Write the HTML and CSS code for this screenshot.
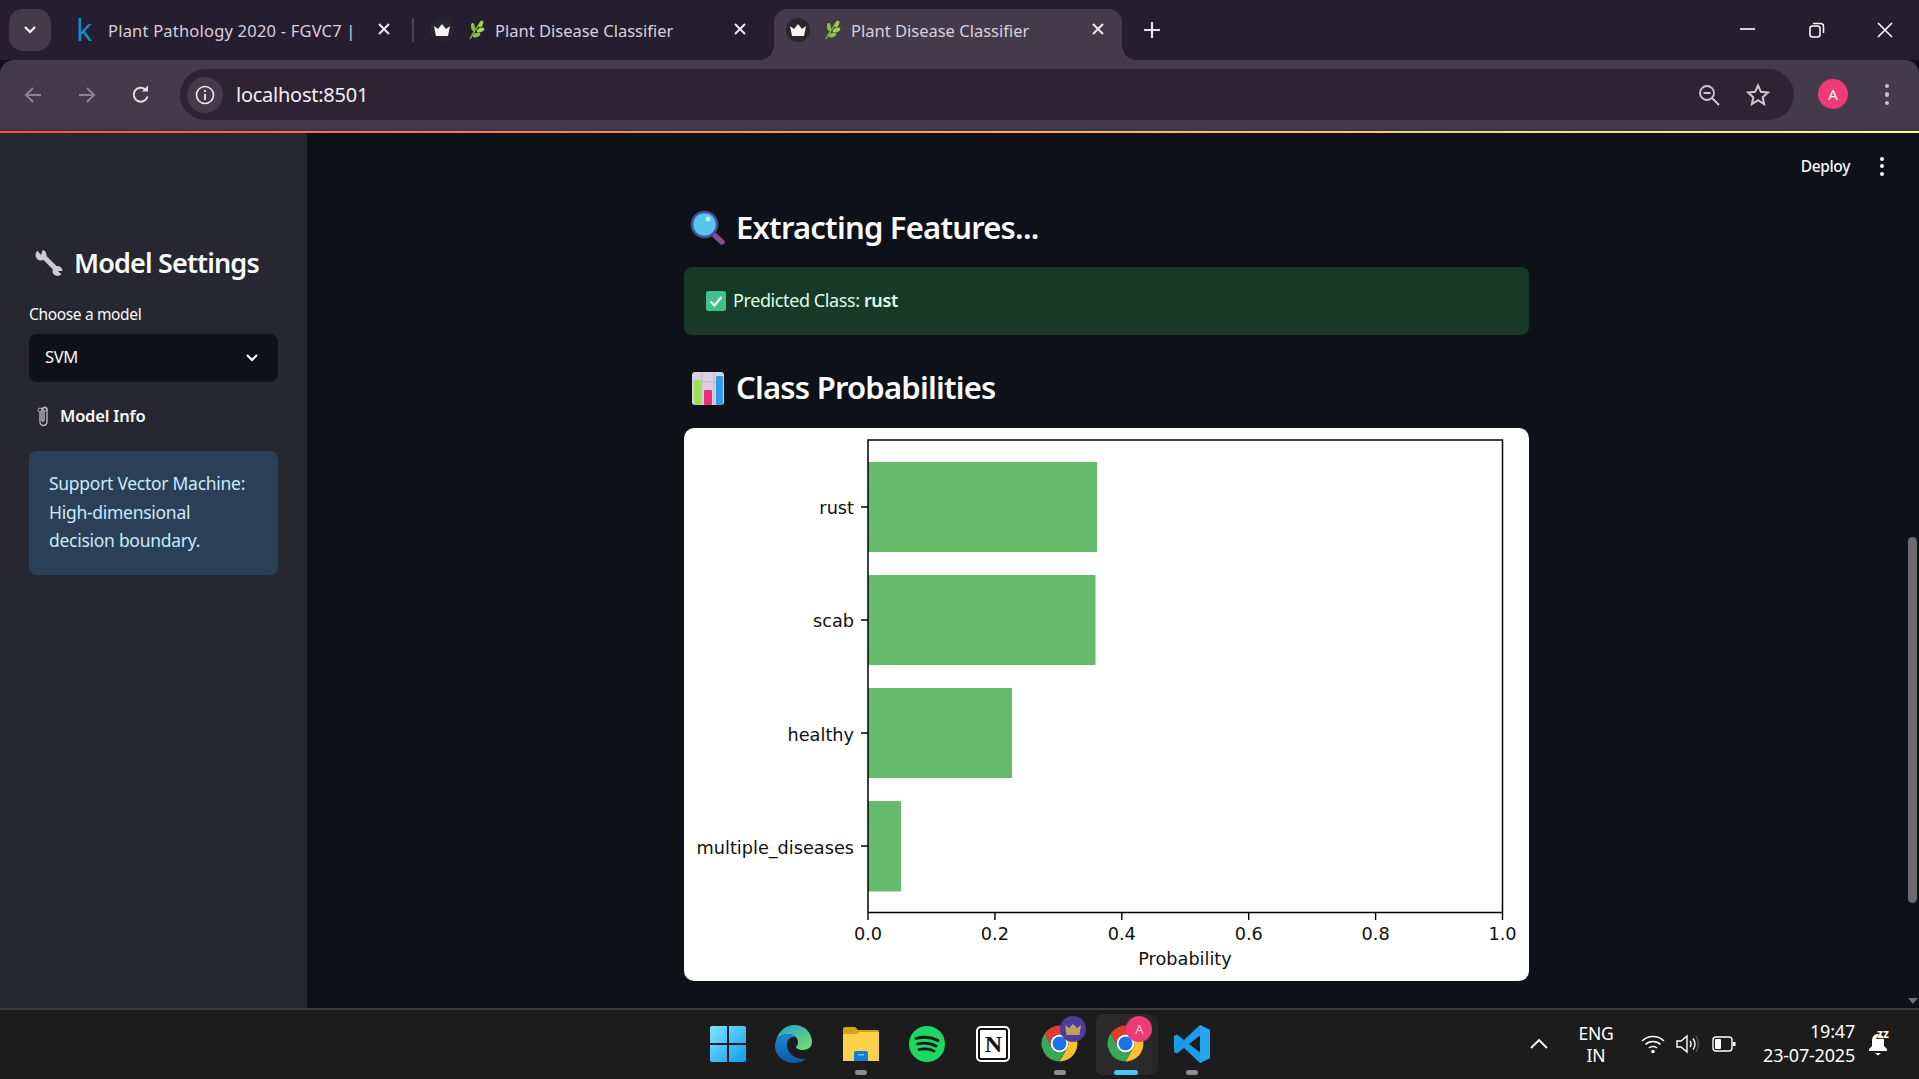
FILE: index.html
```html
<!DOCTYPE html>
<html lang="en">
<head>
<meta charset="utf-8">
<title>Plant Disease Classifier</title>
<link rel="stylesheet" href="styles.css">
</head>
<body>
<div class="screen">
  <header class="tabstrip">
    <div class="tab-menu"><svg width="14" height="10" viewBox="0 0 14 10"><path d="M2 2l5 5 5-5" fill="none" stroke="#fff" stroke-width="2.2"/></svg></div>
    <div class="tab tab-first">
      <span class="kaggle">k</span>
      <span class="tab-title">Plant Pathology 2020 - FGVC7 |</span>
      <svg class="tab-close" width="20" height="20" viewBox="0 0 20 20"><path d="M5 5l10 10M15 5L5 15" stroke="#efe9f3" stroke-width="2"/></svg>
    </div>
    <span class="tab-sep"></span>
    <div class="tab tab-second">
      <span class="crown-badge"><svg width="18" height="14" viewBox="0 0 18 14"><path d="M1 3l4 3 4-5 4 5 4-3-2 10H3z" fill="#f4f4f4"/></svg></span>
      <svg class="leaf" width="20" height="20" viewBox="0 0 20 20"><path d="M4 19C7 13 10 8 15 2" fill="none" stroke="#7fb53a" stroke-width="1.5"/><ellipse cx="15" cy="4" rx="2" ry="3.6" fill="#9fd043" transform="rotate(25 15 4)"/><ellipse cx="14.5" cy="10" rx="4" ry="2" fill="#a6d64a" transform="rotate(-20 14.5 10)"/><ellipse cx="7" cy="7" rx="1.9" ry="4" fill="#8cc63f" transform="rotate(-8 7 7)"/><ellipse cx="10.5" cy="15" rx="4" ry="2" fill="#8cc63f" transform="rotate(-20 10.5 15)"/></svg>
      <span class="tab-title">Plant Disease Classifier</span>
      <svg class="tab-close" width="20" height="20" viewBox="0 0 20 20"><path d="M5 5l10 10M15 5L5 15" stroke="#efe9f3" stroke-width="2"/></svg>
    </div>
    <div class="tab tab-active">
      <span class="crown-badge"><svg width="18" height="14" viewBox="0 0 18 14"><path d="M1 3l4 3 4-5 4 5 4-3-2 10H3z" fill="#f4f4f4"/></svg></span>
      <svg class="leaf" width="20" height="20" viewBox="0 0 20 20"><path d="M4 19C7 13 10 8 15 2" fill="none" stroke="#7fb53a" stroke-width="1.5"/><ellipse cx="15" cy="4" rx="2" ry="3.6" fill="#9fd043" transform="rotate(25 15 4)"/><ellipse cx="14.5" cy="10" rx="4" ry="2" fill="#a6d64a" transform="rotate(-20 14.5 10)"/><ellipse cx="7" cy="7" rx="1.9" ry="4" fill="#8cc63f" transform="rotate(-8 7 7)"/><ellipse cx="10.5" cy="15" rx="4" ry="2" fill="#8cc63f" transform="rotate(-20 10.5 15)"/></svg>
      <span class="tab-title">Plant Disease Classifier</span>
      <svg class="tab-close" width="20" height="20" viewBox="0 0 20 20"><path d="M5 5l10 10M15 5L5 15" stroke="#efe9f3" stroke-width="2"/></svg>
    </div>
    <svg class="tab-new" width="20" height="20" viewBox="0 0 20 20"><path d="M10 2v16M2 10h16" stroke="#e6dfea" stroke-width="2.2"/></svg>
    <div class="window-controls">
      <span class="win-btn win-min"><svg width="16" height="16" viewBox="0 0 16 16"><path d="M0 7h15" stroke="#fff" stroke-width="1.6"/></svg></span>
      <span class="win-btn"><svg width="16" height="16" viewBox="0 0 16 16"><rect x="1" y="4" width="10" height="11" rx="2.5" fill="none" stroke="#fff" stroke-width="1.5"/><path d="M4 1.500h7.500A3 3 0 0 1 14.500 4.500V11" fill="none" stroke="#fff" stroke-width="1.5"/></svg></span>
      <span class="win-btn"><svg width="16" height="16" viewBox="0 0 16 16"><path d="M1 1l14 14M15 1L1 15" stroke="#fff" stroke-width="1.6"/></svg></span>
    </div>
  </header>

  <nav class="toolbar">
    <span class="nav-btn"><svg width="20" height="20" viewBox="0 0 20 20"><path d="M18 10H3M10 3l-7 7 7 7" fill="none" stroke="#8b8492" stroke-width="2"/></svg></span>
    <span class="nav-btn"><svg width="20" height="20" viewBox="0 0 20 20"><path d="M2 10h15M10 3l7 7-7 7" fill="none" stroke="#8b8492" stroke-width="2"/></svg></span>
    <span class="nav-btn"><svg width="20" height="20" viewBox="0 0 20 20"><path d="M16.500 11.500A7 7 0 1 1 14.500 4.500" fill="none" stroke="#e6dfea" stroke-width="2"/><path d="M11 6.500h6v-6z" fill="#e6dfea"/></svg></span>
    <div class="address">
      <span class="info-chip"><svg width="20" height="20" viewBox="0 0 20 20"><circle cx="10" cy="10" r="8.500" fill="none" stroke="#efe9f3" stroke-width="1.600"/><path d="M10 9v6M10 5v2" stroke="#efe9f3" stroke-width="1.800"/></svg></span>
      <span class="url">localhost:8501</span>
      <span class="addr-icons">
        <svg width="22" height="22" viewBox="0 0 22 22"><circle cx="9" cy="9" r="7" fill="none" stroke="#cfc8d4" stroke-width="1.800"/><path d="M5.500 9h7M14 14l7 7" stroke="#cfc8d4" stroke-width="1.800"/></svg>
        <svg width="24" height="24" viewBox="0 0 24 24"><path d="M12 2.500l2.900 6.300 6.900.8-5.100 4.700 1.400 6.800L12 17.200l-6.100 3.900 1.400-6.800L2.200 9.600l6.900-.8z" fill="none" stroke="#cfc8d4" stroke-width="2"/></svg>
      </span>
    </div>
    <span class="avatar">A</span>
    <span class="kebab"><i></i><i></i><i></i></span>
  </nav>

  <div class="decoration"></div>

  <div class="app">
    <aside class="sidebar">
      <h2 class="side-title">
        <svg width="28" height="28" viewBox="0 0 28 28"><path d="M7 6l15 15" stroke="#cfc7dc" stroke-width="5"/><circle cx="6" cy="6" r="5.500" fill="#cfc7dc"/><path d="M6 6L1 0h7z" fill="#262730"/><circle cx="22.500" cy="22" r="5" fill="#cfc7dc"/><path d="M23 22l5 0 0 5z" fill="#262730"/></svg>
        <span class="side-title-text">Model Settings</span>
      </h2>
      <label class="field-label">Choose a model</label>
      <div class="select">
        <span class="select-value">SVM</span>
        <svg width="14" height="10" viewBox="0 0 14 10"><path d="M2 2l5 5 5-5" fill="none" stroke="#fff" stroke-width="2.200"/></svg>
      </div>
      <div class="info-title">
        <svg width="14" height="22" viewBox="0 0 14 22"><path d="M4 7v10a3.500 3.500 0 0 0 7 0V5a2.500 2.500 0 0 0-5 0v10a1 1 0 0 0 2 0V6" fill="none" stroke="#b9b4bd" stroke-width="1.400"/><circle cx="4" cy="5" r="2" fill="none" stroke="#b9b4bd"/><circle cx="9" cy="4" r="2" fill="none" stroke="#b9b4bd"/></svg>
        <strong>Model Info</strong>
      </div>
      <div class="info-box">Support Vector Machine:<br>High-dimensional<br>decision boundary.</div>
    </aside>

    <main class="main">
      <div class="stream-header">
        <span class="deploy">Deploy</span>
        <span class="kebab kebab-white"><i></i><i></i><i></i></span>
      </div>
      <section class="content">
        <h2 class="heading">
          <svg width="36" height="36" viewBox="0 0 36 36"><path d="M21 22l11 10" stroke="#8a4a92" stroke-width="5.500" stroke-linecap="round"/><circle cx="14.500" cy="14.500" r="12.500" fill="#56c7ea" stroke="#4c4a9a" stroke-width="2.500"/><circle cx="18" cy="9" r="2.500" fill="#c6f0fb"/></svg>
          <span class="heading-text">Extracting Features...</span>
        </h2>
        <div class="success">
          <svg width="20" height="20" viewBox="0 0 20 20"><rect width="20" height="20" rx="2.500" fill="#41c28a"/><path d="M4.500 10.500l4 4 7-8.500" fill="none" stroke="#fff" stroke-width="2"/></svg>
          <span class="success-text">Predicted Class: <strong>rust</strong></span>
        </div>
        <h2 class="heading heading-second">
          <svg width="36" height="36" viewBox="0 0 36 36"><rect x="2" y="2" width="32" height="33" rx="3" fill="#d8d2de"/><path d="M12 2v33M24 2v33M2 12h32" stroke="#bdb6c6"/><rect x="4" y="10" width="7" height="25" rx="2" fill="#9ee05a"/><rect x="14" y="20" width="8" height="15" rx="1" fill="#ea2f78"/><rect x="26" y="6" width="7" height="29" rx="1" fill="#2f9bf0"/></svg>
          <span class="heading-text">Class Probabilities</span>
        </h2>
        <figure class="chart-card">
          <svg class="chart" viewBox="684 428 845 553" width="845" height="553">
            <g class="bars">
              <rect x="868" y="462" width="229" height="90"/>
              <rect x="868" y="575" width="227.500" height="90"/>
              <rect x="868" y="688" width="144" height="90"/>
              <rect x="868" y="801" width="33" height="90.500"/>
            </g>
            <rect class="frame" x="868" y="440" width="634.500" height="472.500"/>
            <path class="ticks" d="M861 507h7M861 620h7M861 733h7M861 846h7M868 913v7M994.900 913v7M1121.800 913v7M1248.700 913v7M1375.600 913v7M1502.500 913v7"/>
            <g class="y-labels">
              <text x="854" y="514">rust</text>
              <text x="854" y="627">scab</text>
              <text x="854" y="741">healthy</text>
              <text x="854" y="854">multiple_diseases</text>
            </g>
            <g class="x-labels">
              <text x="868" y="940">0.0</text>
              <text x="994.900" y="940">0.2</text>
              <text x="1121.800" y="940">0.4</text>
              <text x="1248.700" y="940">0.6</text>
              <text x="1375.600" y="940">0.8</text>
              <text x="1502.500" y="940">1.0</text>
              <text x="1185" y="965">Probability</text>
            </g>
          </svg>
        </figure>
      </section>
      <div class="scroll-thumb"></div>
      <div class="scroll-arrow"></div>
    </main>
  </div>

  <footer class="taskbar">
    <div class="task-icons">
      <span class="task-item">
        <svg width="36" height="36" viewBox="0 0 36 36"><defs><linearGradient id="w" x1="0" y1="0" x2="1" y2="1"><stop offset="0" stop-color="#7fe4fb"/><stop offset="1" stop-color="#0f9df0"/></linearGradient></defs><path d="M0 2a2 2 0 0 1 2-2h15v17H0zM19 0h15a2 2 0 0 1 2 2v15H19zM0 19h17v17H2a2 2 0 0 1-2-2zM19 19h17v15a2 2 0 0 1-2 2H19z" fill="url(#w)"/></svg>
      </span>
      <span class="task-item">
        <svg width="38" height="38" viewBox="0 0 38 38"><defs><linearGradient id="e1" x1="0" y1="0" x2="1" y2="1"><stop offset="0" stop-color="#1ba0d8"/><stop offset="1" stop-color="#7be06a"/></linearGradient><linearGradient id="e2" x1="0" y1="0" x2="0" y2="1"><stop offset="0" stop-color="#1e88d6"/><stop offset="1" stop-color="#0c59a4"/></linearGradient></defs><path d="M19 0C29 0 37 7 37 17c0 5-4 8-9 8-4 0-7-2-7-3 0-1 2-1 2-5 0-5-5-8-10-8-6 0-13 4-13 12C1 9 9 0 19 0z" fill="url(#e1)"/><path d="M0 21c0-8 7-12 13-12 3 0 6 1 8 3-5-1-9 2-9 8 0 8 8 14 16 14 2 0 3 0 4-1-3 3-8 5-13 5C9 38 0 31 0 21z" fill="url(#e2)"/></svg>
      </span>
      <span class="task-item task-open">
        <svg width="36" height="34" viewBox="0 0 36 34"><path d="M0 2a2 2 0 0 1 2-2h10l3 3h19a2 2 0 0 1 2 2v6H0z" fill="#dca211"/><path d="M0 7h14l3-2h19v29H0z" fill="#fdd04c"/><path d="M11 26a2 2 0 0 1 2-2h10a2 2 0 0 1 2 2v8H11z" fill="#0f7fd6"/><rect x="15" y="27" width="6" height="1.500" fill="#7cc3f2"/></svg>
      </span>
      <span class="task-item">
        <svg width="36" height="36" viewBox="0 0 36 36"><circle cx="18" cy="18" r="18" fill="#1ed760"/><path d="M7 12.500c7-2 15-1.500 22 2M8.500 18c6-1.500 13-1 18.500 2M10 23.500c5-1 11-.8 15 1.600" fill="none" stroke="#14161a" stroke-width="2.800" stroke-linecap="round"/></svg>
      </span>
      <span class="task-item">
        <span class="notion">N</span>
      </span>
      <span class="task-item task-open">
        <span class="chrome-wrap">
          <svg width="39" height="39" viewBox="0 0 48 48"><use href="#chrome-logo"/></svg>
          <span class="chrome-badge badge-purple"><svg width="18" height="12" viewBox="0 0 18 12"><path d="M1 2l4 3 4-4 4 4 4-3-1.500 10h-13z" fill="#b9a25e"/></svg></span>
        </span>
      </span>
      <span class="task-item task-active">
        <span class="chrome-wrap">
          <svg width="39" height="39" viewBox="0 0 48 48"><symbol id="chrome-logo" viewBox="0 0 48 48"><path d="M5.950 11.350A22 22 0 0 1 43.050 13H24A11 11 0 0 0 14.470 29.500z" fill="#e33b2e"/><path d="M43.050 13A22 22 0 0 1 24 46l9.530-16.500A11 11 0 0 0 24 13z" fill="#fbc02d"/><path d="M24 46A22 22 0 0 1 5.950 11.350L14.470 29.500a11 11 0 0 0 19.060 0z" fill="#3aa757"/><circle cx="24" cy="24" r="11" fill="#fff"/><circle cx="24" cy="24" r="8.500" fill="#1a73e8"/></symbol><use href="#chrome-logo"/></svg>
          <span class="chrome-badge badge-pink">A</span>
        </span>
      </span>
      <span class="task-item task-open">
        <svg width="36" height="38" viewBox="0 0 36 38"><path d="M26 0l10 5v28l-10 5-16-15-7 5.500L0 27V11l3-1.500 7 5.500zM26 10.500L15 19l11 8.500z" fill="#1d9be8"/><path d="M26 0L3 22.500 0 27v-2l21-21z" fill="#0f74c4" opacity=".6"/><path d="M26 0l10 5v28l-10 5z" fill="#27a6f0"/></svg>
      </span>
    </div>
    <div class="tray">
      <svg class="tray-chevron" width="18" height="12" viewBox="0 0 18 12"><path d="M1 10l8-8 8 8" fill="none" stroke="#fff" stroke-width="1.800"/></svg>
      <div class="lang">ENG<br>IN</div>
      <svg class="tray-wifi" width="24" height="20" viewBox="0 0 24 20"><path d="M1 7c6-6 16-6 22 0M4.500 10.500c4-4 11-4 15 0M8 14c2-2 6-2 8 0" fill="none" stroke="#fff" stroke-width="1.500"/><circle cx="12" cy="17.500" r="1.800" fill="#fff"/></svg>
      <svg class="tray-sound" width="24" height="20" viewBox="0 0 24 20"><path d="M1 7v6h4l6 5V2L5 7z" fill="none" stroke="#fff" stroke-width="1.400"/><path d="M14 7c1.500 2 1.500 4 0 6M17 4.500c2.500 3.500 2.500 7.500 0 11" fill="none" stroke="#fff" stroke-width="1.400"/><path d="M20 2c3 5 3 11 0 16" fill="none" stroke="#555" stroke-width="1.400"/></svg>
      <svg class="tray-battery" width="24" height="16" viewBox="0 0 24 16"><rect x="1" y="1" width="19" height="14" rx="3" fill="none" stroke="#fff" stroke-width="1.400"/><rect x="3" y="3" width="6" height="10" rx="1" fill="#fff"/><rect x="21" y="6" width="2.500" height="4" fill="#fff"/></svg>
      <div class="clock">19:47<br>23-07-2025</div>
      <span class="bell"><svg width="22" height="24" viewBox="0 0 22 24"><path d="M10 2c-4 0-6 3-6 7v5l-3 3v2h18v-2l-3-3V9c0-4-2-7-6-7z" fill="#fff"/><path d="M7 21h6l-3 2.500z" fill="#fff"/></svg><span class="bell-z">zz</span></span>
    </div>
  </footer>
</div>
</body>
</html>
```
FILE: styles.css
```css
* { box-sizing: border-box; }
html, body { margin: 0; padding: 0; }
body { background: #0e1117; font-family: "Noto Sans", sans-serif; color: #fafafa; overflow: hidden; }
.screen { width: 1919px; height: 1079px; display: flex; flex-direction: column; overflow: hidden; }

/* Tab strip */
.tabstrip { height: 60px; flex: none; display: flex; align-items: flex-start; background: #251e30; }
.tab-menu { width: 42px; height: 42px; margin: 9px 0 0 9px; border-radius: 14px; background: #433b4c; display: flex; align-items: center; justify-content: center; }
.tab { height: 51px; margin-top: 9px; display: flex; align-items: flex-start; padding-top: 9px; color: #d8d1dd; font-size: 16.500px; letter-spacing: 0; flex: none; }
.tab-title { line-height: 26px; white-space: nowrap; }
.tab-close { margin-left: auto; margin-top: 1px; flex: none; }
.tab-first { width: 351px; margin-left: 10px; padding-left: 15px; padding-right: 18px; }
.kaggle { width: 17px; margin-right: 15px; color: #0f8fc4; font: 500 31px/22px "Open Sans", sans-serif; }
.tab-first .tab-title { width: 252px; overflow: hidden; letter-spacing: 0.2px; }
.tab-sep { width: 2px; height: 24px; margin-top: 18px; background: #4a4352; flex: none; }
.tab-second { width: 360px; padding-left: 16px; padding-right: 24px; }
.tab-active { position: relative; width: 348px; padding-left: 12px; padding-right: 14px; border-radius: 14px 14px 0 0; background: #433b4c; }
.tab-active::before, .tab-active::after { content: ""; position: absolute; bottom: 0; width: 14px; height: 14px; }
.tab-active::before { left: -14px; background: radial-gradient(circle at 0 0, transparent 13.500px, #433b4c 14px); }
.tab-active::after { right: -14px; background: radial-gradient(circle at 100% 0, transparent 13.500px, #433b4c 14px); }
.crown-badge { width: 24px; height: 24px; border-radius: 50%; background: #26262c; display: flex; align-items: center; justify-content: center; flex: none; }
.leaf { margin: 2px 9px 0 12px; flex: none; }
.tab-new { margin: 20px 0 0 20px; flex: none; }
.window-controls { margin-left: auto; display: flex; }
.win-btn { width: 68px; height: 60px; display: flex; align-items: center; justify-content: center; }
.win-min { padding-right: 2px; }

/* Toolbar */
.toolbar { height: 71px; flex: none; padding: 9px 0 0 6px; display: flex; align-items: flex-start; background: #433b4c; border-radius: 14px 14px 0 0; border-bottom: 2px solid #3a3342; }
.nav-btn { width: 54px; height: 51px; display: flex; align-items: center; justify-content: center; flex: none; }
.address { width: 1614px; height: 51px; margin-left: 12px; padding-left: 7px; display: flex; align-items: center; background: #2c2435; border-radius: 26px; flex: none; }
.info-chip { width: 36px; height: 36px; border-radius: 50%; background: #433b4c; display: flex; align-items: center; justify-content: center; }
.url { margin-left: 13px; font-size: 20px; letter-spacing: -0.25px; color: #f2eef5; }
.addr-icons { margin-left: auto; margin-right: 24px; display: flex; align-items: center; gap: 26px; }
.avatar { width: 30px; height: 30px; margin: 10px 0 0 24px; border-radius: 50%; background: #ee3b78; color: #fff; font-size: 15px; line-height: 30px; text-align: center; flex: none; }
.kebab { width: 20px; height: 51px; margin-left: 29px; display: flex; flex-direction: column; align-items: center; justify-content: center; gap: 4px; flex: none; }
.kebab i { width: 4.500px; height: 4.500px; border-radius: 50%; background: #c8bcd8; }
.decoration { height: 2px; flex: none; background: linear-gradient(90deg, #ff4b4b, #fffd80); }

/* App */
.app { flex: 1; min-height: 0; display: flex; }
.sidebar { width: 307px; flex: none; padding: 110px 29px 0; background: #262730; }
.side-title { height: 40px; margin: 0 0 21px 6px; display: flex; align-items: center; gap: 11px; font-size: 27px; font-weight: 600; letter-spacing: -0.85px; color: #fafafa; white-space: nowrap; }
.side-title-text { margin-top: -2px; }
.field-label { display: block; height: 20px; margin: 0 0 10px; font-size: 15.500px; line-height: 20px; letter-spacing: -0.35px; color: #fafafa; }
.select { height: 48px; padding: 0 19px 0 16px; display: flex; align-items: center; justify-content: space-between; background: #0e1117; border-radius: 8px; font-size: 16.500px; letter-spacing: -0.3px; }
.select-value { margin-top: -3px; }
.info-title { height: 24px; margin: 22px 0 23px 7px; display: flex; align-items: center; gap: 10px; font-size: 16.500px; letter-spacing: -0.2px; }
.info-title strong { font-weight: 600; margin-top: -2px; }
.info-box { height: 124px; padding: 18px 10px 0 20px; background: #2b3f58; border-radius: 8px; color: #c7ebff; font-size: 17.500px; line-height: 28.500px; letter-spacing: -0.28px; white-space: nowrap; }

.main { position: relative; flex: 1; padding: 75px 0 0 377px; background: #0e1117; }
.stream-header { position: absolute; top: 21px; right: 27px; display: flex; align-items: center; }
.deploy { font-size: 15.500px; line-height: 24px; letter-spacing: -0.35px; color: #fafafa; font-weight: 500; }
.kebab-white { height: 24px; margin-left: 22px; width: 20px; gap: 3.500px; }
.kebab-white i { width: 4px; height: 4px; background: #fafafa; }
.content { width: 845px; }
.heading { height: 40px; margin: 0; padding-left: 6px; display: flex; align-items: center; gap: 10px; font-size: 31px; font-weight: 600; letter-spacing: -0.78px; color: #fafafa; white-space: nowrap; }
.heading-text { margin-top: -3px; }
.heading-second { margin-top: 33px; }
.success { height: 68px; margin-top: 19px; padding-left: 22px; display: flex; align-items: center; gap: 7px; background: #173928; border-radius: 8px; color: #dffde9; font-size: 18px; letter-spacing: -0.4px; }
.success-text { margin-top: -3px; }
.success strong { font-weight: 600; }
.chart-card { width: 845px; height: 553px; margin: 20px 0 0; background: #fff; border-radius: 10px; overflow: hidden; }
.chart { display: block; }
.bars rect { fill: #66bb6a; }
.frame { fill: none; stroke: #000; stroke-width: 1.500px; }
.ticks { fill: none; stroke: #000; stroke-width: 1.400px; }
.chart text { font-family: "DejaVu Sans", sans-serif; font-size: 17.700px; fill: #111; }
.y-labels text { text-anchor: end; }
.x-labels text { text-anchor: middle; }
.scroll-thumb { position: absolute; top: 404px; right: 2px; width: 9px; height: 366px; border-radius: 5px; background: #6b6b6e; }
.scroll-arrow { position: absolute; bottom: 4px; right: 1px; width: 0; height: 0; border: 5.500px solid transparent; border-top: 6px solid #6f6f72; border-bottom: 0; }

/* Taskbar */
.taskbar { position: relative; height: 71px; flex: none; display: flex; background: #1c1c1c; border-top: 2px solid #3a3a3a; }
.task-icons { margin-left: 695px; display: flex; }
.task-item { position: relative; width: 66.300px; height: 69px; padding-bottom: 2px; display: flex; align-items: center; justify-content: center; flex: none; }
.task-open::after, .task-active::after { content: ""; position: absolute; bottom: 4px; left: 50%; width: 12px; height: 5px; margin-left: -6px; border-radius: 3px; background: #8d8d8d; }
.task-active::before { content: ""; position: absolute; inset: 4px 6px 4px 3px; border-radius: 7px; background: #2a2a2a; box-shadow: 6px 0 0 -1px #262626; }
.task-active::after { width: 24px; margin-left: -12px; background: #4cc2ff; }
.notion { width: 30px; height: 32px; border: 2px solid #111; outline: 2px solid #fff; background: #fff; border-radius: 3px; color: #111; font: 700 24px/28px "Liberation Serif", serif; text-align: center; }
.chrome-wrap { position: relative; width: 39px; height: 39px; display: block; z-index: 1; }
.chrome-wrap > svg { display: block; }
.chrome-badge { position: absolute; top: -8px; left: 20px; width: 26px; height: 26px; border-radius: 50%; display: flex; align-items: center; justify-content: center; font-size: 13px; color: #ffc0d6; }
.badge-purple { background: #4f3a9e; }
.badge-pink { background: #ee3b78; }
.tray { position: absolute; top: 0; right: 0; width: 395px; height: 67px; display: flex; align-items: center; color: #fff; }
.tray-chevron { margin-left: 6px; flex: none; }
.lang { width: 60px; margin-left: 18px; text-align: center; font-size: 17.500px; line-height: 22px; letter-spacing: -0.2px; }
.tray-wifi { margin-left: 15px; flex: none; }
.tray-sound { margin-left: 11px; flex: none; }
.tray-battery { margin-left: 12px; flex: none; }
.clock { width: 119px; text-align: right; font-size: 18px; line-height: 23.500px; letter-spacing: -0.2px; }
.bell { position: relative; width: 22px; height: 24px; margin-left: 13px; display: block; flex: none; }
.bell svg { display: block; }
.bell-z { position: absolute; top: -4px; left: 9px; font-size: 12px; font-weight: 700; line-height: 12px; color: #fff; text-shadow: -1px 1px 0 #1c1c1c; }
```
